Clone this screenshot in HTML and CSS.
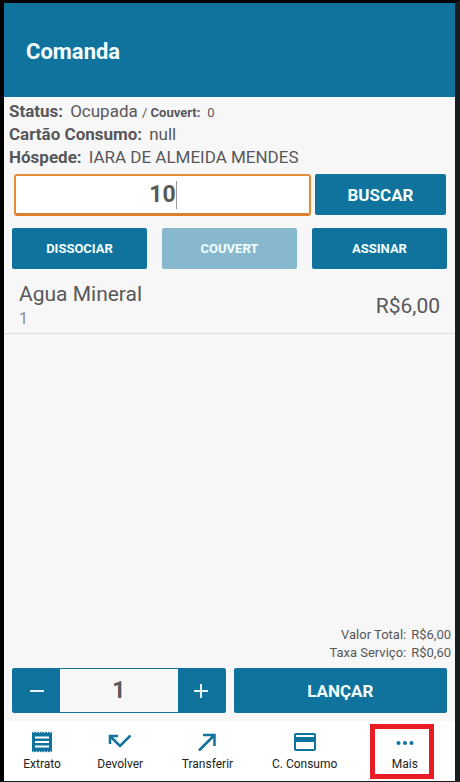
FILE: index.html
```html
<!DOCTYPE html>
<html lang="pt-BR">
<head>
<meta charset="utf-8">
<meta name="viewport" content="width=device-width, initial-scale=1">
<title>Comanda</title>
<link rel="stylesheet" href="styles.css">
</head>
<body>
<div class="app">
  <header class="app-bar"><h1>Comanda</h1></header>
  <main class="content">
    <section class="info">
      <p><b>Status:</b><span class="value">Ocupada</span> <small>/ <b>Couvert:</b><span class="value">0</span></small></p>
      <p><b>Cartão Consumo:</b><span class="value">null</span></p>
      <p><b>Hóspede:</b><span class="value">IARA DE ALMEIDA MENDES</span></p>
    </section>
    <form class="search">
      <div class="field">
        <input type="text" value="10" aria-label="Número da comanda">
        <span class="caret"></span>
      </div>
      <button type="button" class="btn btn-large">BUSCAR</button>
    </form>
    <div class="actions">
      <button type="button" class="btn">DISSOCIAR</button>
      <button type="button" class="btn" disabled>COUVERT</button>
      <button type="button" class="btn">ASSINAR</button>
    </div>
    <ul class="items">
      <li class="item">
        <div>
          <div class="item-name">Agua Mineral</div>
          <div class="item-qty">1</div>
        </div>
        <div class="item-price">R$6,00</div>
      </li>
    </ul>
    <div class="totals">
      <p>Valor Total:<span>R$6,00</span></p>
      <p>Taxa Serviço:<span>R$0,60</span></p>
    </div>
    <div class="launch">
      <div class="stepper">
        <button type="button" aria-label="Diminuir"><svg width="14" height="14" viewBox="0 0 14 14"><path d="M0 7h14"/></svg></button>
        <input type="text" value="1" aria-label="Quantidade">
        <button type="button" aria-label="Aumentar"><svg width="14" height="14" viewBox="0 0 14 14"><path d="M0 7h14M7 0v14"/></svg></button>
      </div>
      <button type="button" class="btn btn-large">LANÇAR</button>
    </div>
  </main>
  <nav class="tabs">
    <a href="#extrato">
      <svg width="24" height="24" viewBox="0 0 24 24"><path class="fill" d="M2 1.500l1.500 1.500L5 1.500 6.500 3 8 1.500 9.500 3 11 1.500 12 3l1-1.500L14.500 3 16 1.500 17.500 3 19 1.500 20.500 3 22 1.500v21L20.500 21 19 22.500 17.500 21 16 22.500 14.500 21 13 22.500 12 21l-1 1.500L9.500 21 8 22.500 6.500 21 5 22.500 3.500 21 2 22.500z"/><path class="cut" d="M5 7.500h14M5 12h14M5 16.500h14"/></svg>
      Extrato
    </a>
    <a href="#devolver">
      <svg width="24" height="24" viewBox="0 0 24 24"><path d="M2 14V6h8M2.500 6.500l9.500 9.500L22.500 5.500"/></svg>
      Devolver
    </a>
    <a href="#transferir">
      <svg width="24" height="24" viewBox="0 0 24 24"><path d="M8 5h11.500v11M19 5.500L4 20.500"/></svg>
      Transferir
    </a>
    <a href="#consumo">
      <svg width="24" height="24" viewBox="0 0 24 24"><rect x="2" y="4" width="20" height="16" rx="1"/><path class="fill" d="M2 7h20v5H2z"/></svg>
      C. Consumo
    </a>
    <a href="#mais" class="highlight">
      <svg width="24" height="24" viewBox="0 0 24 24"><g class="fill"><circle cx="5.500" cy="13" r="2"/><circle cx="12" cy="13" r="2"/><circle cx="18.500" cy="13" r="2"/></g></svg>
      Mais
    </a>
  </nav>
</div>
</body>
</html>
```
FILE: styles.css
```css
* { box-sizing: border-box; }

:root {
  --blue: #0f739e;
  --text: #58585a;
}

body {
  margin: 0;
  font-family: Roboto, "Liberation Sans", sans-serif;
  color: var(--text);
}

p, h1, ul { margin: 0; padding: 0; }
button, input { font: inherit; margin: 0; }

.app {
  display: flex;
  flex-direction: column;
  min-height: 100vh;
  border-style: solid;
  border-width: 3px 5px 1px 4px;
  border-color: #000 #1a1d20 #1a1d20 #000;
  background: #f7f7f7;
}

.app-bar {
  display: flex;
  align-items: center;
  height: 94px;
  padding: 2px 22px 0;
  background: var(--blue);
  color: #f4ffff;
}
.app-bar h1 { font-size: 22px; font-weight: 700; }

.content {
  flex: 1;
  display: flex;
  flex-direction: column;
  padding-bottom: 8px;
}

.info {
  padding: 3px 5px 5px;
  font-size: 17px;
  line-height: 23px;
}
.info p { height: 23px; }
.info small { font-size: 13px; }
.info .value { margin-left: 7px; }

.search {
  display: flex;
  gap: 4px;
  padding: 0 9px 0 10px;
}
.field { position: relative; flex: 297; }
.field input {
  display: block;
  width: 100%;
  height: 42px;
  padding: 0;
  border: 2px solid #e38d36;
  border-bottom: 3px solid #dc7f2c;
  border-radius: 3px;
  outline: 0;
  background: #fff;
  color: var(--text);
  font-size: 23px;
  font-weight: 700;
  text-align: center;
}
.caret {
  position: absolute;
  top: 7px;
  left: calc(50% + 13px);
  width: 1px;
  height: 28px;
  background: #999;
}
.search .btn { flex: 131; height: 41px; }

.btn {
  padding: 0;
  border: 0;
  border-radius: 2px;
  background: var(--blue);
  color: #f4ffff;
  font-size: 13px;
  font-weight: 700;
}
.btn:disabled { background: #87b8ce; }
.btn-large { font-size: 17px; }

.actions {
  display: grid;
  grid-template-columns: repeat(3, 1fr);
  gap: 15px;
  padding: 12px 8px 0;
}
.actions .btn { height: 41px; }

.items { flex: 1; list-style: none; }
.item {
  display: flex;
  justify-content: space-between;
  align-items: center;
  padding: 10px 15px 4px;
  border-bottom: 1px solid #dedede;
}
.item-name { font-size: 21px; line-height: 30px; }
.item-qty { font-size: 16px; line-height: 20px; color: #8c8c8c; }
.item-price { padding-top: 4px; font-size: 21px; line-height: 30px; }

.totals {
  padding: 0 4px 6px;
  font-size: 13px;
  line-height: 18px;
  text-align: right;
}
.totals span { margin-left: 5px; }

.launch {
  display: grid;
  grid-template-columns: 1fr 1fr;
  gap: 8px;
  padding: 0 8px;
}
.stepper {
  display: grid;
  grid-template-columns: 47px 1fr 47px;
  height: 45px;
  border: 1px solid var(--blue);
  border-radius: 2px;
  background: var(--blue);
}
.stepper input {
  width: 100%;
  min-width: 0;
  padding: 0;
  border: 0;
  background: #f7f7f7;
  color: var(--text);
  font-size: 23px;
  font-weight: 700;
  text-align: center;
}
.stepper button {
  display: flex;
  align-items: center;
  justify-content: center;
  padding: 0;
  border: 0;
  background: var(--blue);
}
.stepper path { stroke: #e4f6fb; stroke-width: 2; }

.tabs {
  display: grid;
  grid-template-columns: 76fr 80fr 94fr 100fr 100fr;
  height: 60px;
  background: #fff;
}
.tabs a {
  position: relative;
  display: flex;
  flex-direction: column;
  align-items: center;
  gap: 2px;
  padding-top: 9px;
  color: #222;
  font-size: 12px;
  line-height: 16px;
  text-decoration: none;
}
.tabs svg { fill: none; stroke: var(--blue); stroke-width: 2.5; }
.tabs rect { stroke-width: 2; }
.tabs .fill { fill: var(--blue); stroke: none; }
.tabs .cut { stroke: #fff; stroke-width: 2; }

.highlight::after {
  content: "";
  position: absolute;
  inset: 3px 21px 2px 15px;
  border: 5px solid #e81c24;
}
```
